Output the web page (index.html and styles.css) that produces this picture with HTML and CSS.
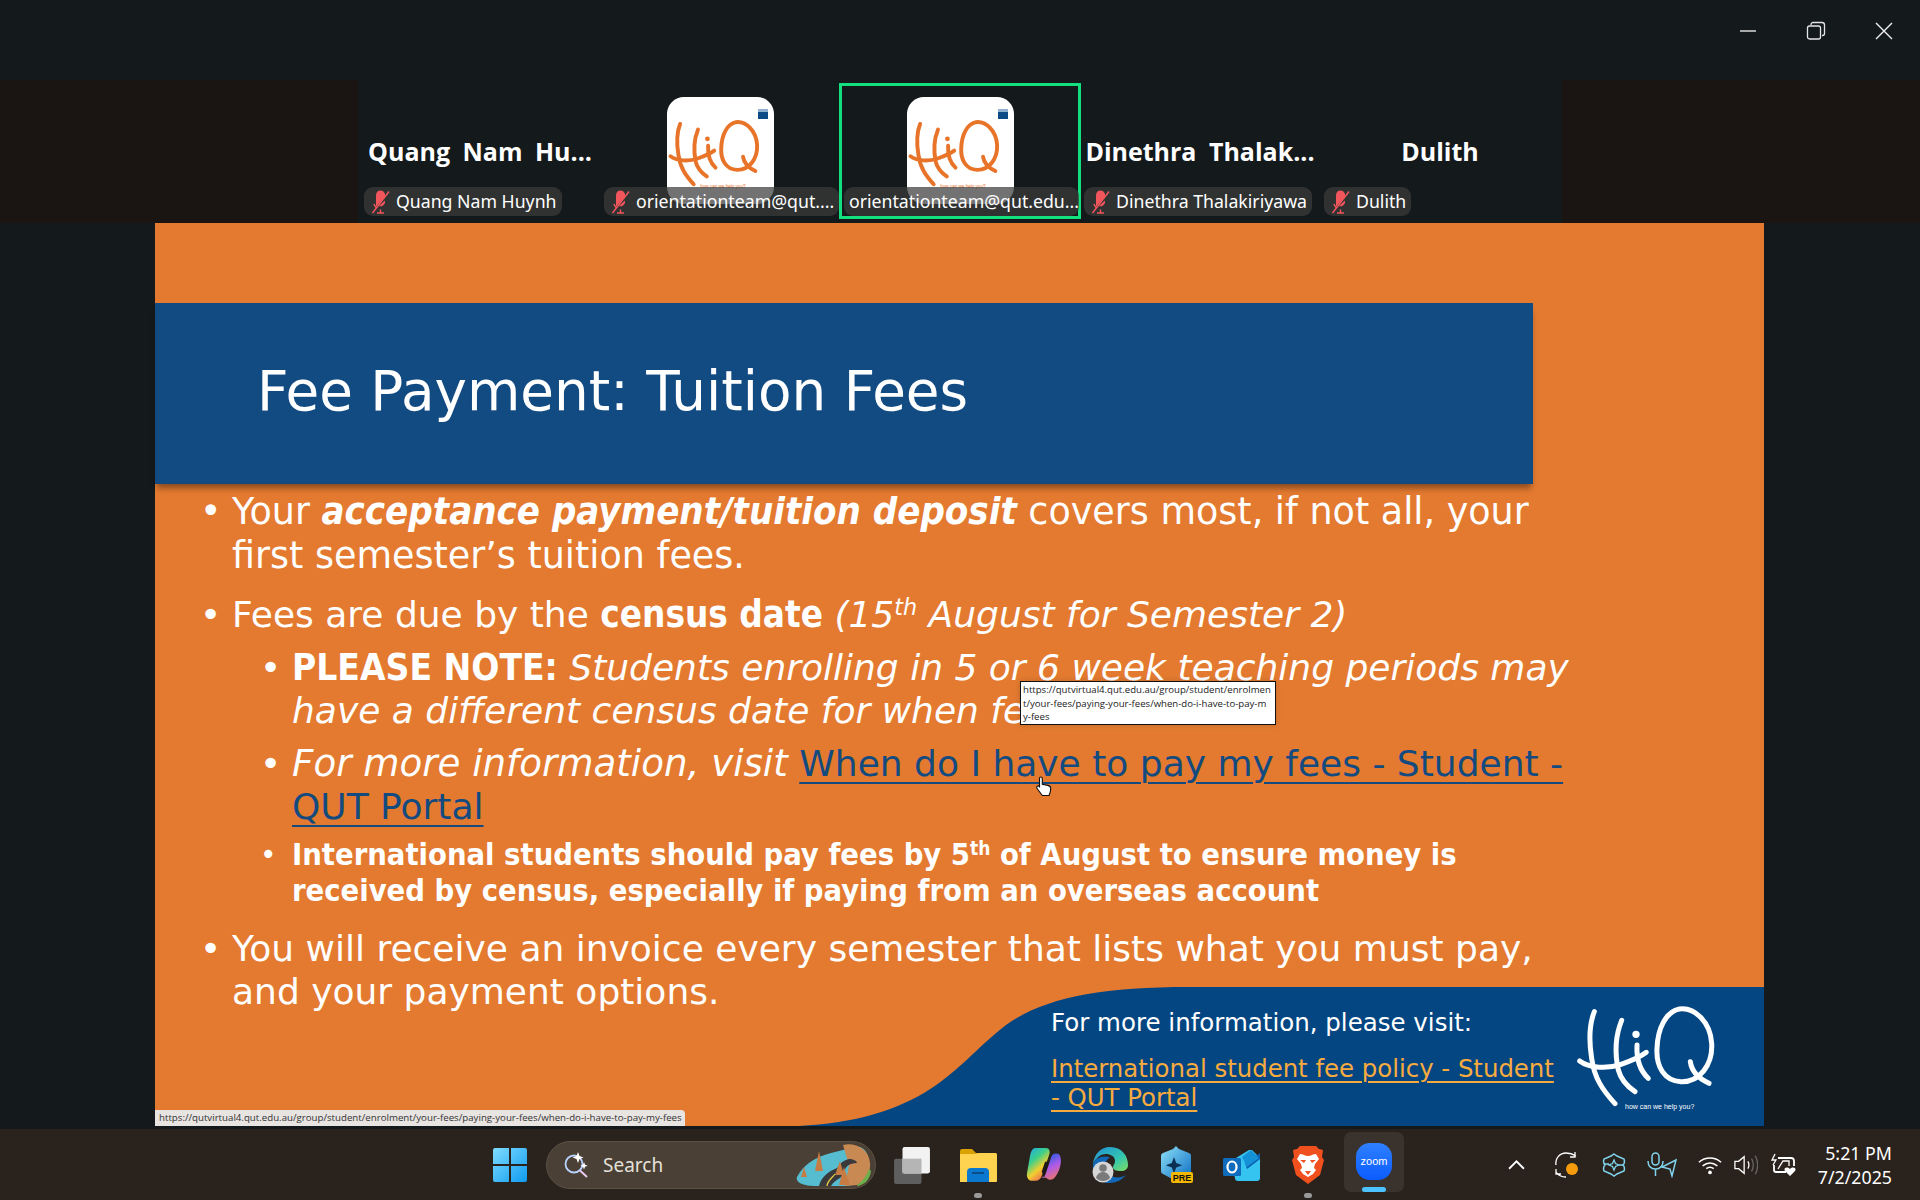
FILE: index.html
```html
<!DOCTYPE html>
<html lang="en">
<head>
<meta charset="utf-8">
<title>Zoom meeting</title>
<link rel="stylesheet" href="styles.css">
</head>
<body>
<svg class="defs" width="0" height="0" aria-hidden="true">
  <symbol id="hiq" viewBox="0 0 510 375">
    <g class="hiq-lines" fill="none" stroke="currentColor" stroke-linecap="round" stroke-linejoin="round">
      <path d="M100 50C86 85 84 140 92 190C100 250 125 285 162 326"/>
      <path d="M182 76C164 120 160 170 172 225C180 255 200 275 222 290"/>
      <path d="M56 198C85 220 140 222 180 208C210 198 235 188 256 172"/>
      <path d="M228 150C226 190 235 225 262 250"/>
      <path d="M355 42C400 36 448 80 452 145C456 210 415 262 360 260C310 258 285 215 288 160C290 100 315 50 355 42Z"/>
      <path d="M388 200C392 232 412 250 444 265"/>
    </g>
    <circle cx="225" cy="118" r="11" fill="currentColor"/>
    <text x="192" y="342" class="hiq-tag">how can we help you?</text>
  </symbol>
  <symbol id="mic-off" viewBox="0 0 20 24">
    <path d="M5 5a4.500 4.500 0 0 1 9 0v2L5 16.500z" fill="#f0565b"/>
    <path d="M14 10.500v2a4.500 4.500 0 0 1-6 3.500z" fill="#f0565b"/>
    <path d="M3 14c.5 1.500 1 2.500 2 3.300M9.500 19.500v3M6 23h7" stroke="#f0565b" stroke-width="1.500" fill="none"/>
    <path d="M1.500 23 18 1.500" stroke="#f0565b" stroke-width="1.500"/>
  </symbol>
</svg>

<div class="app">
  <header class="titlebar">
    <button class="winbtn" aria-label="Minimise"><svg width="18" height="18" viewBox="0 0 18 18"><path d="M1 9h16" stroke="#cfcfcf" stroke-width="1.600"/></svg></button>
    <button class="winbtn" aria-label="Restore"><svg width="20" height="20" viewBox="0 0 20 20" fill="none" stroke="#e6e6e6" stroke-width="1.300"><rect x="1.500" y="5" width="13" height="13" rx="2"/><path d="M5 4V3.500A2 2 0 0 1 7 1.500h9A2.500 2.500 0 0 1 18.500 4v8.500a2 2 0 0 1-2 2H16"/></svg></button>
    <button class="winbtn" aria-label="Close"><svg width="18" height="18" viewBox="0 0 18 18"><path d="M1 1l16 16M17 1 1 17" stroke="#f0f0f0" stroke-width="1.400"/></svg></button>
  </header>

  <section class="strip">
    <div class="tiles">
      <div class="tile">
        <div class="display-name">Quang Nam Hu...</div>
        <div class="pill"><svg class="mic"><use href="#mic-off"/></svg><span>Quang Nam Huynh</span></div>
      </div>
      <div class="tile">
        <div class="avatar"><svg class="avatar-logo"><use href="#hiq"/></svg><span class="avatar-badge"></span></div>
        <div class="pill pill-full"><svg class="mic"><use href="#mic-off"/></svg><span>orientationteam@qut....</span></div>
      </div>
      <div class="tile tile-active">
        <div class="avatar"><svg class="avatar-logo"><use href="#hiq"/></svg><span class="avatar-badge"></span></div>
        <div class="pill pill-full"><span>orientationteam@qut.edu...</span></div>
      </div>
      <div class="tile">
        <div class="display-name">Dinethra Thalak...</div>
        <div class="pill"><svg class="mic"><use href="#mic-off"/></svg><span>Dinethra Thalakiriyawa</span></div>
      </div>
      <div class="tile">
        <div class="display-name">Dulith</div>
        <div class="pill"><svg class="mic"><use href="#mic-off"/></svg><span>Dulith</span></div>
      </div>
    </div>
  </section>

  <main class="stage">
    <article class="slide">
      <h1 class="slide-title">Fee Payment: Tuition Fees</h1>
      <ul class="points">
        <li class="point point-first"><div>Your <b class="wide"><i>acceptance payment/tuition deposit</i></b> covers most, if not all, your<br>first semester’s tuition fees.</div></li>
        <li class="point point-gap"><div>Fees are due by the <b>census date</b> <i>(15<sup>th</sup> August for Semester 2)</i></div></li>
        <li class="point sub"><div><b class="note">PLEASE NOTE:</b> <i>Students enrolling in 5 or 6 week teaching periods may<br>have a different census date for when fees are due</i></div></li>
        <li class="point sub"><div><i class="visit">For more information, visit</i> <a class="slide-link" href="#">When do I have to pay my fees - Student -<br>QUT Portal</a></div></li>
        <li class="point sub small"><div>International students should pay fees by 5<sup>th</sup> of August to ensure money is<br>received by census, especially if paying from an overseas account</div></li>
        <li class="point point-last"><div>You will receive an invoice every semester that lists what you must pay,<br>and your payment options.</div></li>
      </ul>

      <aside class="more">
        <svg class="more-curve" viewBox="0 0 965 139" preserveAspectRatio="none" aria-hidden="true">
          <path d="M0 139C55 136 92 125 125 106C160 85 178 60 207 38C245 11 300 0 390 0H965V139Z" fill="#044682"/>
        </svg>
        <div class="more-text">
          <p class="more-lead">For more information, please visit:</p>
          <a class="more-link" href="#">International student fee policy - Student<br>- QUT Portal</a>
        </div>
        <svg class="more-logo"><use href="#hiq"/></svg>
      </aside>

      <div class="tooltip">https://qutvirtual4.qut.edu.au/group/student/enrolmen<br>t/your-fees/paying-your-fees/when-do-i-have-to-pay-m<br>y-fees</div>
      <svg class="cursor" viewBox="0 0 16 20" aria-hidden="true"><path d="M5 1.500c1 0 1.500.7 1.500 1.500v5l5 1c1.500.4 2.500 1.200 2.500 2.800 0 2.200-.6 4-1.500 6.200H6.500L2 12c-.8-1-.5-2 .3-2.400.7-.3 1.300 0 1.700.5V3c0-1 .3-1.500 1-1.500Z" fill="#fff" stroke="#111" stroke-width="1"/></svg>
      <div class="statusbar">https://qutvirtual4.qut.edu.au/group/student/enrolment/your-fees/paying-your-fees/when-do-i-have-to-pay-my-fees</div>
    </article>
  </main>

  <footer class="taskbar">
    <svg class="start" viewBox="0 0 36 36" aria-hidden="true">
      <defs><linearGradient id="wg" x1="0" y1="0" x2="1" y2="1"><stop offset="0" stop-color="#7fdcff"/><stop offset="1" stop-color="#0f9bf0"/></linearGradient></defs>
      <path d="M1 3a2 2 0 0 1 2-2h14v16H1zM19 1h14a2 2 0 0 1 2 2v14H19zM1 19h16v16H3a2 2 0 0 1-2-2zM19 19h16v14a2 2 0 0 1-2 2H19z" fill="url(#wg)"/>
    </svg>
    <div class="search">
      <svg class="search-icon" viewBox="0 0 26 28" aria-hidden="true">
        <circle cx="11" cy="13" r="8.500" fill="none" stroke="#b9d3ff" stroke-width="1.800"/>
        <path d="M17 19.500 24 26" stroke="#e7c9f2" stroke-width="2"/>
        <path d="M15 1l1.500 4 4 1.500-4 1.500-1.500 4-1.500-4-4-1.500 4-1.500zM21 11l1 2.700 2.700 1-2.700 1-1 2.700-1-2.700-2.700-1 2.700-1z" fill="#fff"/>
      </svg>
      <span class="search-label">Search</span>
      <svg class="search-art" viewBox="0 0 76 44" aria-hidden="true">
        <path d="M2 34C8 22 20 14 36 10L60 4C68 2 74 10 74 20C74 32 66 42 50 43L20 43C10 43 0 40 2 34Z" fill="#56bcd0"/>
        <path d="M48 2C60-1 74 6 75 20C76 30 70 38 62 42L50 43L54 22Z" fill="#c88a52"/>
        <path d="M62 42C68 38 72 32 74 26L76 28C75 36 70 42 62 43Z" fill="#6cae4a"/>
        <path d="M24 43C26 34 34 28 40 26C46 24 44 18 54 16C58 16 62 18 62 20C54 20 50 24 50 28C50 34 40 36 36 43Z" fill="#3a3a3c"/>
        <path d="M20 28l4-20 4 20zM40 32l5-14 4 14zM44 42l5-18 6 18zM6 34l3-10 3 10z" fill="#c67c42"/>
        <path d="M32 43C32 38 38 34 40 31" stroke="#f0d040" stroke-width="1.200" fill="none"/>
      </svg>
    </div>
    <div class="apps">
      <div class="app-btn">
        <svg viewBox="0 0 36 36"><rect x="1" y="12" width="26" height="24" rx="2" fill="#5e5e5e"/><rect x="9" y="1" width="26" height="25" rx="2" fill="#f2f2f2"/><rect x="9" y="12" width="18" height="14" fill="#b5b5b5"/></svg>
      </div>
      <div class="app-btn has-dot">
        <svg viewBox="0 0 38 36"><path d="M1 4a2 2 0 0 1 2-2h10l4 4h19a2 2 0 0 1 2 2v4H1z" fill="#d9a200"/><path d="M1 7h15l4-1h16a2 2 0 0 1 2 2v26a1 1 0 0 1-1 1H1z" fill="#ffd34f"/><path d="M8 25a4 4 0 0 1 4-4h14a4 4 0 0 1 4 4v10H8z" fill="#0a78cf"/><path d="M13 26h12" stroke="#0c3f72" stroke-width="1.500"/></svg>
      </div>
      <div class="app-btn">
        <svg viewBox="0 0 34 36">
          <defs><linearGradient id="cp" x1="0" y1="0" x2=".6" y2="1"><stop offset="0" stop-color="#1fa7f0"/><stop offset=".4" stop-color="#3ccf8a"/><stop offset=".7" stop-color="#f0d030"/><stop offset="1" stop-color="#f06a50"/></linearGradient><linearGradient id="cp2" x1=".4" y1="0" x2=".8" y2="1"><stop offset="0" stop-color="#1a5ee0"/><stop offset=".5" stop-color="#b05ae8"/><stop offset="1" stop-color="#f0785c"/></linearGradient></defs>
          <path d="M9 2h10c3 0 4 3 3 6l-7 20c-1 3-3 5-6 5H6c-4 0-6-4-5-8L4 8c1-3 2-6 5-6Z" fill="url(#cp)"/>
          <path d="M19 30h-6c3 0 5-2 6-5l5-15c1-2 2-3 4-3h1c3 0 4 3 4 7 0 6-3 13-6 16-2 2-5 3-8 0Z" fill="url(#cp2)"/>
          <path d="M15 24l3-9h4l-5 15z" fill="#1c1a18"/>
        </svg>
      </div>
      <div class="app-btn">
        <svg viewBox="0 0 36 38">
          <defs><linearGradient id="eg" x1="0" y1="0" x2="1" y2="1"><stop offset="0" stop-color="#1f8fd8"/><stop offset=".6" stop-color="#33c6b0"/><stop offset="1" stop-color="#7fdc60"/></linearGradient></defs>
          <path d="M18 1C30 1 36 10 36 19c0 4-3 6-7 6-5 0-8-1-8-4 0-2 2-3 2-6 0-5-5-7-9-7C8 8 3 13 1 18 2 8 9 1 18 1Z" fill="url(#eg)"/>
          <path d="M1 18c-1 9 5 19 16 19 7 0 13-3 17-8-3 2-8 3-12 2-6-2-10-6-9-12 .4-3 2-6 5-8C10 9 3 12 1 18Z" fill="#1168b8"/>
          <circle cx="11" cy="26" r="10.500" fill="#d6d6d6"/><circle cx="11" cy="22" r="3.800" fill="#7a7a7a"/><path d="M4 32c1-4 4-6 7-6s6 2 7 6c-2 2-4 3-7 3s-5-1-7-3Z" fill="#7a7a7a"/>
        </svg>
      </div>
      <div class="app-btn">
        <svg viewBox="0 0 36 38">
          <defs><linearGradient id="pr" x1="0" y1="0" x2="1" y2="1"><stop offset="0" stop-color="#8ee2f8"/><stop offset="1" stop-color="#0b6bc2"/></linearGradient></defs>
          <path d="M18 0l3 3 10 4a3 3 0 0 1 2 3v15a3 3 0 0 1-2 3l-13 7-13-7a3 3 0 0 1-2-3V10a3 3 0 0 1 2-3l10-4z" fill="url(#pr)"/>
          <path d="M16 11l2.200 6 6 2.200-6 2.200-2.200 6-2.200-6-6-2.200 6-2.200z" fill="#0c2f54"/>
          <rect x="13" y="26" width="22" height="11" rx="2" fill="#f5b800"/>
          <text x="24" y="35" class="pre">PRE</text>
        </svg>
      </div>
      <div class="app-btn">
        <svg viewBox="0 0 38 32">
          <path d="M8 12 26 1h3l8 8v20a3 3 0 0 1-3 3H15a3 3 0 0 1-3-3Z" fill="#35c3f0"/>
          <path d="M22 14 37 4v6L24 20Z" fill="#0a5fae"/><path d="M19 8l9-7 8 8-12 9z" fill="#1591d8"/>
          <rect x="0" y="9" width="18" height="18" rx="1.500" fill="#0f6cbd"/><ellipse cx="9" cy="18" rx="4.500" ry="5.500" fill="none" stroke="#fff" stroke-width="2.200"/>
        </svg>
      </div>
      <div class="app-btn has-dot">
        <svg viewBox="0 0 32 38">
          <path d="M8 0h16l3 3 4 1-1 7 2 3-4 15-12 9-12-9L0 14l2-3-1-7 4-1z" fill="#f0501e"/>
          <path d="M8 8c3 0 5 2 8 2s5-2 8-2l3 5-4 5-1 4 2 2-3 4-5 3-5-3-3-4 2-2-1-4-4-5z" fill="#fff"/>
          <path d="M8 14h6l-2 3zM24 14h-6l2 3z" fill="#f0501e"/><path d="M13 25h6l-3 4z" fill="#f0501e"/>
        </svg>
      </div>
      <div class="app-btn app-btn-on">
        <span class="zoom-icon">zoom</span>
      </div>
    </div>
    <div class="tray">
      <svg class="tray-icon chev" viewBox="0 0 16 10"><path d="M1 9l7-7 7 7" fill="none" stroke="#fff" stroke-width="1.700"/></svg>
      <svg class="tray-icon sync" viewBox="0 0 26 26"><path d="M2 13C1 6 6 1 12 1c4 0 7 1 10 3M21 0v5h-5M2 20c2 3 6 5 10 5M2 17v5h5" fill="none" stroke="#fff" stroke-width="1.300"/><circle cx="18" cy="17" r="6" fill="#f59c0c"/></svg>
      <svg class="tray-icon hexa" viewBox="0 0 24 24"><path d="M12 1l3 2 7 3c1 3 0 5-1 6 1 1 2 3 1 6l-7 3-3 2-3-2-7-3c-1-3 0-5 1-6-1-1-2-3-1-6l7-3z" fill="none" stroke="#7fd3ec" stroke-width="1.500"/><path d="M12 7l1.500 3.500L17 12l-3.500 1.500L12 17l-1.500-3.500L7 12l3.500-1.500zM2 11h5M17 12h5" fill="none" stroke="#7fd3ec" stroke-width="1.300"/></svg>
      <svg class="tray-icon micsend" viewBox="0 0 32 26"><rect x="6" y="1" width="7" height="12" rx="3.500" fill="none" stroke="#7fd3ec" stroke-width="1.500"/><path d="M2 9c0 5 3 8 7.500 8s7.500-3 7.500-8M9.500 17v7" fill="none" stroke="#7fd3ec" stroke-width="1.500"/><path d="M30 8 16 15l8 2 2 7z" fill="none" stroke="#7fd3ec" stroke-width="1.500"/></svg>
      <svg class="tray-icon wifi" viewBox="0 0 26 20"><path d="M1 7c7-6 17-6 24 0M5 11c5-4 11-4 16 0M9 14c2.500-2 5.500-2 8 0" fill="none" stroke="#fff" stroke-width="1.700"/><circle cx="13" cy="18" r="2" fill="#fff"/></svg>
      <svg class="tray-icon vol" viewBox="0 0 26 22"><path d="M1 7h4l6-5v18l-6-5H1z" fill="none" stroke="#fff" stroke-width="1.400"/><path d="M15 7c1.500 2 1.500 6 0 8" fill="none" stroke="#fff" stroke-width="1.400"/><path d="M19 4c2.500 4 2.500 10 0 14M23 1c3.500 6 3.500 14 0 20" fill="none" stroke="#666" stroke-width="1.400"/></svg>
      <svg class="tray-icon batt" viewBox="0 0 26 24"><path d="M5 1 2 7h4L3 12" fill="none" stroke="#fff" stroke-width="1.300"/><path d="M8 5h13a3 3 0 0 1 3 3v5M4 12v5a2 2 0 0 0 2 2h10" fill="none" stroke="#fff" stroke-width="1.800"/><path d="M8 16l5-8h6v5" fill="none" stroke="#fff" stroke-width="1.300"/><path d="M20 23l-5-5c-2-3 2-5 5-2 3-3 7-1 5 2z" fill="#fff"/></svg>
      <div class="clock"><span>5:21 PM</span><span>7/2/2025</span></div>
    </div>
  </footer>
</div>
</body>
</html>
```
FILE: styles.css
```css
* { box-sizing: border-box; }
html, body { margin: 0; padding: 0; }
body { background: #14191c; font-family: "Noto Sans", "Open Sans", sans-serif; overflow: hidden; }
.defs { position: absolute; }
.app { width: 1920px; height: 1200px; display: flex; flex-direction: column; overflow: hidden; }

/* title bar */
.titlebar { height: 80px; flex: none; display: flex; justify-content: flex-end; align-items: flex-start; padding: 21px 27px 0 0; gap: 50px; background: #14191c; }
.winbtn { width: 18px; height: 20px; padding: 0; border: 0; background: none; display: flex; align-items: center; justify-content: center; }
.winbtn svg { flex: none; }

/* participant strip */
.strip { height: 143px; flex: none; background: #1a1512; display: flex; justify-content: center; }
.tiles { width: 1204px; background: #14191c; display: grid; grid-template-columns: repeat(5, 240px); padding-left: 2px; }
.tile { position: relative; display: flex; flex-direction: column; align-items: center; padding-top: 14px; height: 136px; margin-top: 3px; }
.tile-active { outline: 3px solid #12e07f; outline-offset: -3px; width: 242px; margin-left: -1px; z-index: 1; }
.display-name { margin-top: 39px; font-family: "Open Sans", sans-serif; font-weight: 700; font-size: 25px; line-height: 30px; color: #fff; word-spacing: 6px; }
.pill { position: absolute; left: 4px; top: 104px; height: 29px; display: flex; align-items: center; gap: 5px; padding: 0 5px 0 7px; border-radius: 9px; background: rgba(60, 60, 60, .72); color: #fff; font-size: 17.700px; line-height: 29px; white-space: nowrap; }
.tile-active .pill { left: 5px; padding-left: 5px; }
.pill-full { max-width: 235px; }
.mic { width: 20px; height: 24px; flex: none; }
.avatar { position: relative; width: 107px; height: 107px; border-radius: 17px; background: #fff; color: #e8742a; display: flex; flex: none; }
.avatar-logo { width: 112px; height: 82px; margin: 16px 0 0 -9px; flex: none; --hiq-sw: 18; }
.avatar-badge { position: absolute; top: 12px; right: 6px; width: 10px; height: 10px; background: #0e4a86; border-top: 3px solid #8fb0d0; }
.hiq-lines { stroke-width: var(--hiq-sw, 14); }
.hiq-tag { font-family: "Liberation Sans", sans-serif; font-size: 21px; fill: currentColor; }

/* slide */
.stage { height: 903px; flex: none; padding-left: 155px; background: #14191c; }
.slide { position: relative; width: 1609px; height: 903px; padding-top: 80px; background: #e37a30; color: #fff; font-family: "DejaVu Sans", sans-serif; }
.slide-title { margin: 0; width: 1378px; height: 181px; background: #124a82; box-shadow: 0 6px 6px -2px rgba(0, 0, 0, .4); padding: 0 0 0 102px; font-size: 54.800px; font-weight: 400; line-height: 176px; }
.points { list-style: none; margin: 6px 0 0; padding: 0 0 0 45px; font-size: 36px; line-height: 43.500px; }
.point { display: grid; grid-template-columns: 32px 1fr; white-space: nowrap; }
.point::before { content: "•"; font-weight: 400; font-stretch: normal; }
.point-first { font-size: 36.500px; }
.point b { font-stretch: condensed; font-size: 36.500px; }
.point .wide { font-size: 38px; }
.point .note { font-size: 36.800px; }
.visit { font-size: 37.200px; }
.point-gap { margin-top: 16px; }
.point sup { font-size: .62em; line-height: 0; vertical-align: .55em; }
.sub { margin: 9px 0 0 60px; }
.small { font-size: 30.600px; line-height: 36.500px; font-weight: 700; font-stretch: condensed; margin-top: 8px; }
.small::before { font-size: 28px; }
.point-last { margin-top: 17px; }
.slide-link { color: #134a7f; text-decoration: underline; text-decoration-thickness: 2px; text-underline-offset: 6px; }

.more { position: absolute; right: 0; bottom: 0; width: 965px; height: 139px; display: flex; align-items: flex-start; }
.more-curve { position: absolute; inset: 0; width: 100%; height: 100%; }
.more-text { position: relative; margin: 20px 0 0 252px; width: 515px; }
.more-lead { margin: 0 0 15px; font-size: 24.500px; line-height: 32px; }
.more-link { color: #f7ab3f; font-size: 24.400px; line-height: 29px; text-decoration: underline; text-underline-offset: 4px; text-decoration-thickness: 2px; white-space: nowrap; }
.more-logo { position: relative; width: 170px; height: 125px; margin: 8px 0 0 -5px; color: #fff; flex: none; --hiq-sw: 15; }

.tooltip { position: absolute; left: 865px; top: 458px; width: 256px; height: 44px; padding: 1px 0 0 2px; background: #fff; border: 1px solid #111; box-shadow: 0 0 6px rgba(0,0,0,.15); color: #222; font-family: "Open Sans", sans-serif; font-size: 9.600px; line-height: 13.500px; white-space: nowrap; }
.cursor { position: absolute; left: 880px; top: 552px; width: 18px; height: 23px; }
.statusbar { position: absolute; left: 0; bottom: 0; width: 530px; height: 16px; padding-left: 4px; background: #e7e4e2; border-radius: 0 4px 0 0; color: #333; font-family: "Open Sans", sans-serif; font-size: 9.700px; line-height: 16px; white-space: nowrap; }

/* taskbar */
.taskbar { height: 74px; flex: none; position: relative; background: #2a221c; border-top: 3px solid #14191c; display: flex; align-items: center; padding: 0 0 0 492px; }
.start { width: 36px; height: 36px; flex: none; margin-right: 18px; }
.search { width: 330px; height: 48px; flex: none; display: flex; align-items: center; padding: 0 4px 0 16px; border-radius: 24px; background: #4a4035; border: 1px solid #5a5044; }
.search-icon { width: 26px; height: 28px; flex: none; }
.search-label { margin-left: 14px; color: #e4e0da; font-size: 19px; }
.search-art { width: 76px; height: 44px; margin-left: auto; }
.apps { display: flex; margin-left: 3px; }
.app-btn { position: relative; width: 66px; height: 66px; display: flex; align-items: center; justify-content: center; border-radius: 7px; }
.app-btn svg { width: 38px; height: 38px; }
.has-dot::after { content: ""; position: absolute; left: 29px; bottom: 0; width: 8px; height: 5px; border-radius: 3px; background: #9a9a9a; }
.app-btn-on { width: 60px; height: 60px; margin: 0 3px; background: #3a322c; }
.app-btn-on::after { content: ""; position: absolute; left: 18px; bottom: 0; width: 24px; height: 5px; border-radius: 3px; background: #4cc2ff; }
.zoom-icon { width: 36px; height: 37px; border-radius: 14px; background: linear-gradient(#2f80ff, #0b5cff); color: #fff; font-family: "Liberation Sans", sans-serif; font-size: 11px; text-align: center; line-height: 37px; }
.tray { position: absolute; right: 0; top: 0; height: 71px; width: 424px; display: flex; align-items: center; }
.tray-icon { flex: none; height: 26px; }
.chev { width: 17px; height: 11px; margin-left: 12px; }
.sync { width: 26px; margin-left: 29px; }
.hexa { width: 24px; margin-left: 22px; }
.micsend { width: 32px; margin-left: 20px; }
.wifi { width: 24px; height: 20px; margin-left: 20px; }
.vol { width: 24px; height: 22px; margin-left: 12px; }
.batt { width: 26px; margin-left: 12px; }
.clock { margin-left: auto; padding-right: 28px; display: flex; flex-direction: column; align-items: flex-end; color: #fff; font-size: 17.800px; line-height: 24px; }
.pre { font-family: "Liberation Sans", sans-serif; font-weight: 700; font-size: 9px; text-anchor: middle; fill: #111; }
```
